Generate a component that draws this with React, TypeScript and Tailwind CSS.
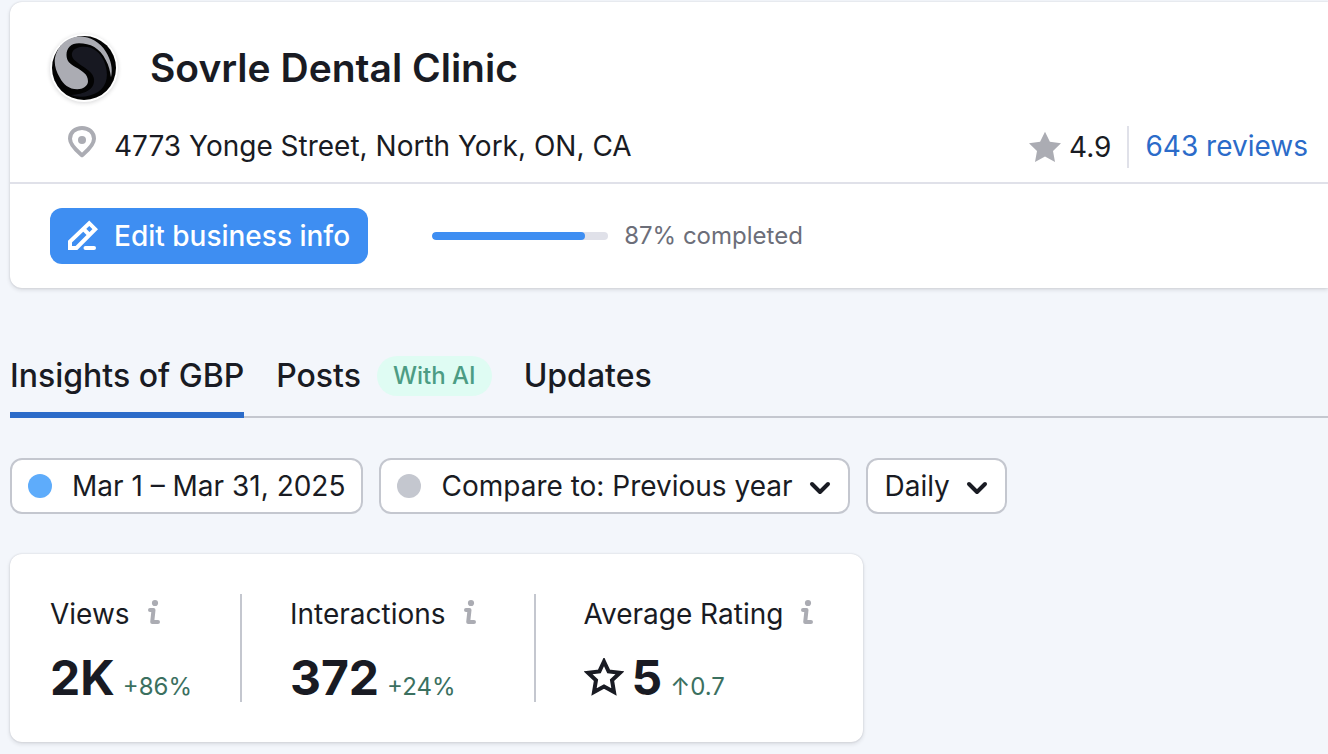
import { useState, type ReactNode } from "react";

const TABS = [
  { id: "insights", label: "Insights of GBP" },
  { id: "posts", label: "Posts", badge: "With AI" },
  { id: "updates", label: "Updates" },
];

export default function App() {
  const [tab, setTab] = useState("insights");

  return (
    <main className="min-h-screen overflow-x-hidden bg-[#f3f6fb] pt-0.5 pb-3 pl-2.5 font-['Inter',sans-serif] text-[28px] leading-10 text-[#191b23]">
      <BusinessCard />

      {/* Tabs */}
      <nav role="tablist" className="mt-[68px] flex gap-8 border-b-2 border-[#c4c7cf]">
        {TABS.map((t) => (
          <button
            key={t.id}
            type="button"
            role="tab"
            aria-selected={tab === t.id}
            onClick={() => setTab(t.id)}
            className={`-mb-0.5 flex items-center gap-4 border-b-6 pb-4 text-[32px] font-medium ${
              tab === t.id ? "border-[#2b6bc9]" : "border-transparent"
            }`}
          >
            {t.label}
            {t.badge && (
              <span className="rounded-full bg-[#dffcf3] px-4 text-2xl leading-10 font-medium text-[#4c9c84]">
                {t.badge}
              </span>
            )}
          </button>
        ))}
      </nav>

      {/* Filters */}
      <div className="mt-10 flex gap-4">
        <button
          type="button"
          className="flex h-14 items-center gap-5 rounded-xl border-2 border-[#c4c7cf] bg-white px-4"
        >
          <span className="size-6 rounded-full bg-[#5eacfb]" />
          Mar 1 – Mar 31, 2025
        </button>
        <FilterSelect label="Compare to" options={["Compare to: Previous year"]} dot />
        <FilterSelect label="Granularity" options={["Daily"]} />
      </div>

      {/* Stats */}
      <section className="mt-10 flex w-fit rounded-xl bg-white py-10 shadow-[0_0_2px_rgba(25,27,35,0.16),0_2px_4px_rgba(25,27,35,0.12)]">
        <Stat label="Views" value="2K" change="+86%" />
        <Stat label="Interactions" value="372" change="+24%" />
        <Stat label="Average Rating" value="5" change="↑0.7" icon={<StarOutlineIcon />} />
      </section>
    </main>
  );
}

function BusinessCard() {
  const completed = 87;

  return (
    <section className="rounded-l-xl bg-white shadow-[0_0_2px_rgba(25,27,35,0.16),0_2px_4px_rgba(25,27,35,0.12)]">
      <div className="border-b-2 border-[#e0e1e9] pt-8 pr-5 pb-3.5 pl-10">
        <div className="flex items-center gap-8">
          <Logo />
          <h1 className="text-[39px] leading-12 font-semibold">Sovrle Dental Clinic</h1>
        </div>
        <div className="mt-6 flex items-start justify-between">
          <div className="flex items-start gap-4 pl-4">
            <PinIcon />
            <span>4773 Yonge Street, North York, ON, CA</span>
          </div>
          <div className="flex items-center">
            <StarIcon />
            <span className="ml-2">4.9</span>
            <a href="#reviews" className="ml-4 border-l-2 border-[#e0e1e9] pb-0.5 pl-4 text-[#2b6bc9]">
              643 reviews
            </a>
          </div>
        </div>
      </div>

      <div className="flex items-center py-6 pl-10">
        <button
          type="button"
          className="flex h-14 items-center gap-4 rounded-xl bg-[#3e8ef2] pr-[18px] pl-4 font-medium text-white"
        >
          <PencilIcon />
          Edit business info
        </button>
        <div className="ml-16 h-2 w-44 overflow-hidden rounded-full bg-[#e0e1e9]">
          <div className="h-full rounded-full bg-[#3e8ef2]" style={{ width: `${completed}%` }} />
        </div>
        <span className="ml-4 text-2xl leading-10 text-[#6c6e79]">{completed}% completed</span>
      </div>
    </section>
  );
}

function FilterSelect({ label, options, dot }: { label: string; options: string[]; dot?: boolean }) {
  return (
    <label className="relative flex h-14 items-center">
      {dot && <span className="absolute left-[18px] size-6 rounded-full bg-[#c4c7cf]" />}
      <select
        aria-label={label}
        className={`h-full appearance-none rounded-xl border-2 border-[#c4c7cf] bg-white pr-[55px] ${
          dot ? "pl-[60px]" : "pl-4"
        }`}
      >
        {options.map((o) => (
          <option key={o}>{o}</option>
        ))}
      </select>
      <ChevronIcon />
    </label>
  );
}

function Stat({ label, value, change, icon }: {
  label: string;
  value: string;
  change: string;
  icon?: ReactNode;
}) {
  return (
    <div className="border-l-2 border-[#c4c7cf] pr-12 pl-12 first:border-l-0 first:pl-10 last:pr-10">
      <div className="flex items-center gap-2">
        {label}
        <InfoIcon />
      </div>
      <div className="mt-5 flex h-12 items-baseline gap-2">
        {icon}
        <span className="text-5xl leading-12 font-bold">{value}</span>
        <span className="text-2xl text-[#3b705f]">{change}</span>
      </div>
    </div>
  );
}

function Logo() {
  return (
    <span className="rounded-full bg-white p-0.5 shadow-[0_1px_4px_rgba(25,27,35,0.18)]">
      <svg viewBox="0 0 64 64" className="size-16">
        <circle cx="32" cy="32" r="32" fill="#030303" />
        <path
          d="M28 11C40 9 48 16 52 25C57 38 56 49 46 56C38 61 27 62 19 59C32 58 43 54 42 43C41 33 22 28 20 20C19 15 23 12 28 11Z"
          fill="#171821"
        />
        <path
          d="M2.7 25C4 11 14 1 28 .6C38 .6 48 6 54 16C59 24 61 33 59 41.3C58 35 57 30 53.7 24C48 12 38 7.3 27 7.3C19 7.3 14.5 12 14.5 19C14.5 25 18 28 23.7 31.3C30 35 36 38 36 45.3C36 50 31 53.3 25.3 53.3C17 53.3 11 48 8 42C4.5 36 2.7 31 2.7 25Z"
          fill="#abacb3"
        />
      </svg>
    </span>
  );
}

function PinIcon() {
  return (
    <svg viewBox="0 0 32 32" className="size-8" fill="none">
      <path
        d="M16 29.2C13 26.4 4 20 4 12.8C4 6.6 9 2 16 2S28 6.6 28 12.8C28 20 19 26.4 16 29.2Z"
        stroke="#abacb3"
        strokeWidth="4"
        strokeLinejoin="round"
      />
      <circle cx="16" cy="14" r="4" fill="#abacb3" />
    </svg>
  );
}

function StarIcon() {
  return (
    <svg viewBox="0 0 32 32" className="size-8" fill="#abacb3">
      <path d="M16 .8L20.9 10.8L32 12.3L24 19.9L26 31L16 25.6L6 31L8 19.9L0 12.3L11.1 10.8Z" />
    </svg>
  );
}

function StarOutlineIcon() {
  return (
    <svg viewBox="0 0 40 40" className="size-10 self-center" fill="none" stroke="#191b23" strokeWidth="4">
      <path d="M20 3.5L24.6 13.4L36 14.8L28 22.2L30 34L20 28.6L10 34L12 22.2L4 14.8L15.4 13.4Z" />
    </svg>
  );
}

function PencilIcon() {
  return (
    <svg viewBox="0 0 32 32" className="size-8" fill="none" stroke="#fff" strokeWidth="4">
      <path d="M4 28V21.5L23.2 3.2L29.2 9.2L10.5 28Z" />
      <path d="M17.5 9L23.5 15" />
      <path d="M19.5 28H28" strokeLinecap="round" />
    </svg>
  );
}

function ChevronIcon() {
  return (
    <svg
      viewBox="0 0 24 24"
      className="pointer-events-none absolute right-[18px] mt-1 size-6"
      fill="none"
      stroke="#191b23"
      strokeWidth="4"
      strokeLinecap="round"
      strokeLinejoin="round"
    >
      <path d="M4 8L12 16L20 8" />
    </svg>
  );
}

function InfoIcon() {
  return (
    <svg viewBox="0 0 32 32" className="size-8" fill="none" stroke="#abacb3">
      <circle cx="17" cy="5" r="3.1" fill="#abacb3" stroke="none" />
      <path
        d="M12 12H15.5L14.2 24M14.2 24H20"
        strokeWidth="4"
        strokeLinecap="round"
        strokeLinejoin="round"
      />
    </svg>
  );
}
